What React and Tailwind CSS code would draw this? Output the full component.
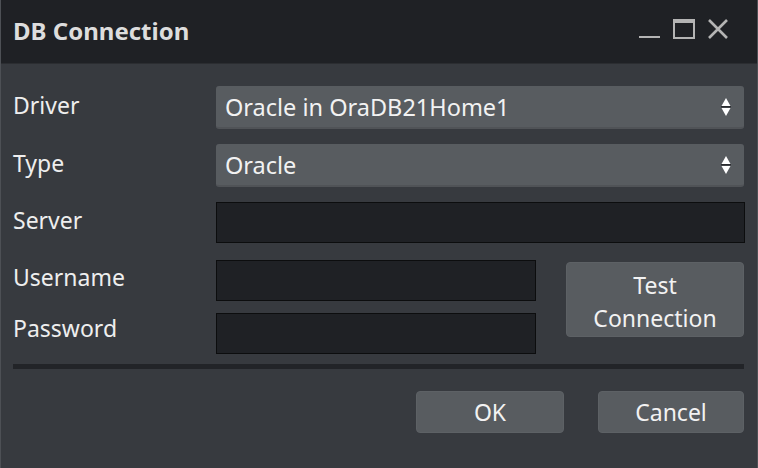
import React from 'react';

const font = { fontFamily: '"Noto Sans", "Open Sans", sans-serif' };

// Up/down arrows used on the select boxes
const SpinArrows = () => (
  <svg width="10" height="20" viewBox="0 0 10 20" className="shrink-0">
    <path d="M5 1 L9.5 9 L0.5 9 Z" fill="#ffffff" />
    <rect x="0" y="9" width="10" height="1.5" fill="#2a2c30" />
    <path d="M5 19 L9.5 11 L0.5 11 Z" fill="#ffffff" />
  </svg>
);

const Select = ({ value }) => (
  <div className="flex-1 h-[43px] flex items-center justify-between pl-[9px] pr-[13px] rounded-[3px] bg-[#585c60] border-b-2 border-[#505357] text-[23.5px] text-[#f2f2f2]">
    <span className="mt-[2px]">{value}</span>
    <SpinArrows />
  </div>
);

const Input = ({ className = '' }) => (
  <div className={`h-[41px] bg-[#1f2125] border border-[#0c0d0e] ${className}`} />
);

const Label = ({ children, className = '-mt-[4px]' }) => (
  <div className={`w-[203px] shrink-0 text-[23px] text-[#eeeeee] ${className}`}>{children}</div>
);

const Button = ({ children, className = '' }) => (
  <button className={`rounded-[4px] bg-[#585c60] border border-[#5d6165] text-[23px] text-[#f2f2f2] leading-[33px] ${className}`}>
    {children}
  </button>
);

export default function App() {
  return (
    <div style={font} className="w-[758px] h-[468px] flex flex-col bg-[#373a3f] border-l border-r border-[#4d5055] overflow-hidden">
      {/* Title bar */}
      <div className="h-[64px] shrink-0 flex items-center justify-between pl-[12px] pr-[28px] bg-[#1f2125] border-b border-[#2b2d31]">
        <h1 className="text-[24px] font-bold text-[#dddddd] -mt-[1px]">DB Connection</h1>
        <div className="flex items-center gap-[12px] -mt-[5px]">
          <svg width="22" height="20" viewBox="0 0 22 20">
            <rect x="0" y="17" width="21" height="2" fill="#b4b4b4" />
          </svg>
          <svg width="22" height="20" viewBox="0 0 22 20">
            <rect x="1" y="1" width="20" height="18" fill="none" stroke="#b4b4b4" strokeWidth="2" />
            <rect x="1" y="1" width="20" height="3" fill="#b4b4b4" />
          </svg>
          <svg width="22" height="20" viewBox="0 0 22 20">
            <path d="M2 1 L20 19 M20 1 L2 19" stroke="#b4b4b4" strokeWidth="2.6" />
          </svg>
        </div>
      </div>

      {/* Form */}
      <div className="flex flex-col pl-[12px] pr-[13px] pt-[22px]">
        <div className="flex items-center">
          <Label>Driver</Label>
          <Select value="Oracle in OraDB21Home1" />
        </div>
        <div className="flex items-center mt-[15px]">
          <Label>Type</Label>
          <Select value="Oracle" />
        </div>
        <div className="flex items-center mt-[15px]">
          <Label>Server</Label>
          <Input className="flex-1 -mr-[1px]" />
        </div>

        <div className="flex mt-[17px]">
          <div className="flex flex-col gap-[12px]">
            <div className="flex items-center">
              <Label className="-mt-[6px]">Username</Label>
              <Input className="w-[320px]" />
            </div>
            <div className="flex items-center">
              <Label className="-mt-[10px]">Password</Label>
              <Input className="w-[320px]" />
            </div>
          </div>
          <Button className="ml-[30px] mt-[2px] h-[75px] flex-1 pt-[4px]">
            Test
            <br />
            Connection
          </Button>
        </div>

        <div className="mt-[10px] h-[5px] bg-[#222428]" />

        <div className="flex justify-end gap-[34px] mt-[22px]">
          <Button className="w-[148px] h-[42px]">OK</Button>
          <Button className="w-[146px] h-[42px]">Cancel</Button>
        </div>
      </div>
    </div>
  );
}
